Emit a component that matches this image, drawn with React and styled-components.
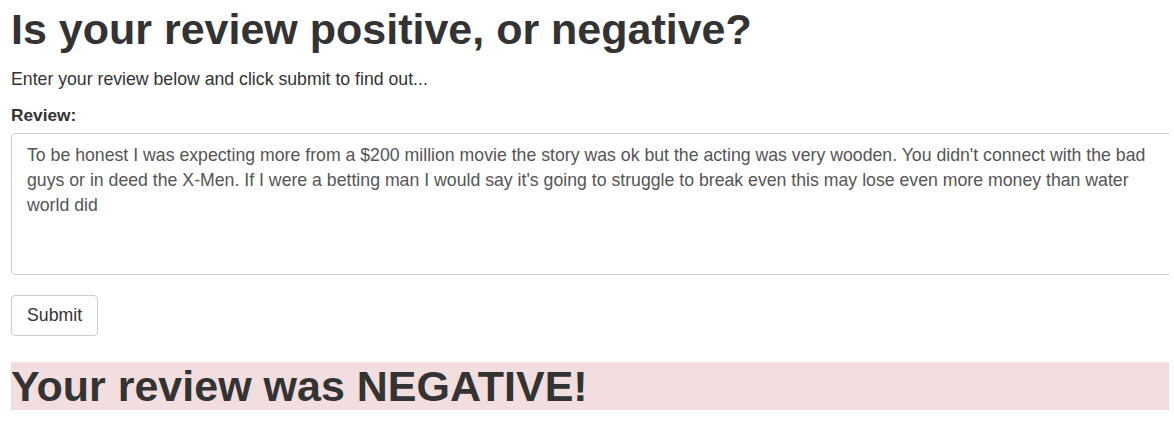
import React from 'react';
import styled, { createGlobalStyle } from 'styled-components';

const GlobalStyle = createGlobalStyle`
  html, body {
    margin: 0;
    padding: 0;
    background: #fff;
  }
  body {
    font-family: "Liberation Sans", Arial, Helvetica, sans-serif;
    color: #333;
  }
`;

const Page = styled.main`
  padding: 0 5px 0 11px;
  overflow: hidden;
`;

const Title = styled.h1`
  margin: 0;
  padding-top: 4px;
  font-size: 43px;
  line-height: 50px;
  font-weight: 700;
  color: #333;
`;

const Lead = styled.p`
  margin: 14px 0 0;
  font-size: 17.7px;
  line-height: 22px;
`;

const Form = styled.form`
  margin-top: 14px;
  display: flex;
  flex-direction: column;
  align-items: flex-start;
`;

const Label = styled.label`
  display: block;
  font-size: 17.3px;
  font-weight: 700;
  line-height: 22px;
  margin-bottom: 7px;
`;

const FieldClip = styled.div`
  width: 100%;
  overflow: hidden;
`;

const ReviewBox = styled.textarea`
  display: block;
  box-sizing: border-box;
  width: calc(100% + 12px);
  height: 142px;
  margin: 0;
  padding: 9px 15px;
  border: 1px solid #ccc;
  border-radius: 4px;
  font-family: inherit;
  font-size: 17.7px;
  line-height: 25px;
  color: #555;
  resize: none;
  outline: none;
`;

const SubmitButton = styled.button`
  margin-top: 20px;
  box-sizing: border-box;
  height: 41px;
  padding: 0 15px;
  background: #fff;
  border: 1px solid #ccc;
  border-radius: 4px;
  font-family: inherit;
  font-size: 17.7px;
  color: #333;
`;

const Result = styled.h1`
  margin: 26px 0 0;
  background: ${({ tone }) => (tone === 'negative' ? '#f2dede' : '#dff0d8')};
  font-size: 43px;
  line-height: 48px;
  font-weight: 700;
  color: #333;
`;

const review = "To be honest I was expecting more from a $200 million movie the story was ok but the acting was very wooden. You didn't connect with the bad guys or in deed the X-Men. If I were a betting man I would say it's going to struggle to break even this may lose even more money than water world did";

export default function App() {
  return (
    <Page>
      <GlobalStyle />
      <Title>Is your review positive, or negative?</Title>
      <Lead>Enter your review below and click submit to find out...</Lead>
      <Form onSubmit={(e) => e.preventDefault()}>
        <Label htmlFor="review">Review:</Label>
        <FieldClip>
          <ReviewBox id="review" defaultValue={review} />
        </FieldClip>
        <SubmitButton type="submit">Submit</SubmitButton>
      </Form>
      <Result tone="negative">Your review was NEGATIVE!</Result>
    </Page>
  );
}
